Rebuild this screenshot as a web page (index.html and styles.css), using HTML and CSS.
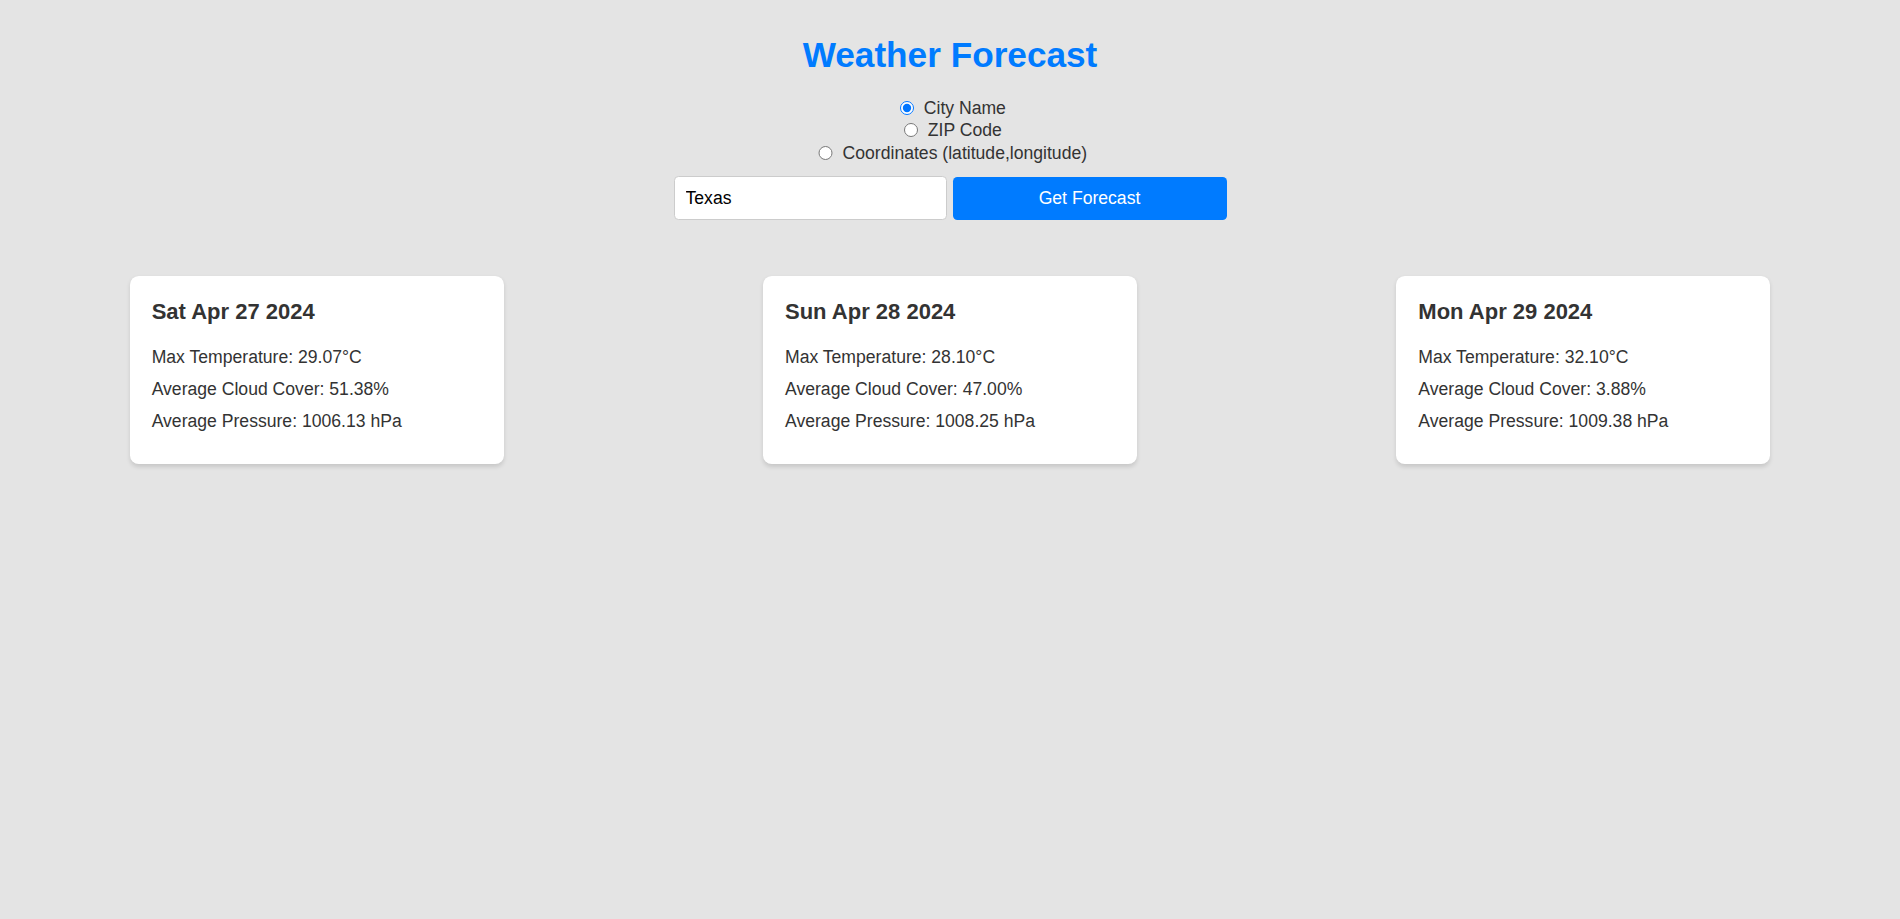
FILE: index.html
```html
<!DOCTYPE html>
<html lang="en">
<head>
<meta charset="UTF-8">
<title>Weather Forecast</title>
<link rel="stylesheet" href="styles.css">
</head>
<body class="page">
  <h1 class="title">Weather Forecast</h1>
  <div class="options">
    <label class="option"><input class="radio" type="radio" name="mode" checked> City Name</label>
    <label class="option"><input class="radio" type="radio" name="mode"> ZIP Code</label>
    <label class="option"><input class="radio" type="radio" name="mode"> Coordinates (latitude,longitude)</label>
  </div>
  <div class="search">
    <input class="search-input" type="text" value="Texas">
    <button class="search-btn" type="button">Get Forecast</button>
  </div>
  <div class="cards">
    <div class="card">
      <h3 class="card-title">Sat Apr 27 2024</h3>
      <p class="card-line">Max Temperature: 29.07°C</p>
      <p class="card-line">Average Cloud Cover: 51.38%</p>
      <p class="card-line">Average Pressure: 1006.13 hPa</p>
    </div>
    <div class="card">
      <h3 class="card-title">Sun Apr 28 2024</h3>
      <p class="card-line">Max Temperature: 28.10°C</p>
      <p class="card-line">Average Cloud Cover: 47.00%</p>
      <p class="card-line">Average Pressure: 1008.25 hPa</p>
    </div>
    <div class="card">
      <h3 class="card-title">Mon Apr 29 2024</h3>
      <p class="card-line">Max Temperature: 32.10°C</p>
      <p class="card-line">Average Cloud Cover: 3.88%</p>
      <p class="card-line">Average Pressure: 1009.38 hPa</p>
    </div>
  </div>
</body>
</html>
```
FILE: styles.css
```css
html, body {
  margin: 0;
  padding: 0;
}
.page {
  background: #e4e4e4;
  font-family: "Liberation Sans", Arial, sans-serif;
  font-size: 17.6px;
  color: #333;
  padding-top: 11px;
  min-height: 919px;
  box-sizing: border-box;
}
.title {
  text-align: center;
  color: #007bff;
  font-size: 35.2px;
  font-weight: bold;
  margin: 23.6px 0 22.4px;
}
.options {
  display: flex;
  flex-direction: column;
  align-items: center;
}
.option {
  display: block;
  line-height: 22px;
  height: 22.5px;
}
.radio {
  width: 14.3px;
  height: 14.3px;
  margin: 0 5px 0 5.5px;
  vertical-align: -1px;
  accent-color: #0075ff;
}
.search {
  display: flex;
  justify-content: center;
  gap: 5.5px;
  margin-top: 11.8px;
}
.search-input {
  box-sizing: border-box;
  width: 273.5px;
  height: 44px;
  padding: 0 11px;
  border: 1.1px solid #ccc;
  border-radius: 4.4px;
  background: #fff;
  font-family: "Liberation Sans", Arial, sans-serif;
  font-size: 17.6px;
  color: #000;
  outline: none;
}
.search-btn {
  box-sizing: border-box;
  width: 274px;
  height: 43px;
  margin-top: 0.5px;
  border: none;
  border-radius: 4.4px;
  background: #007bff;
  color: #fff;
  font-family: "Liberation Sans", Arial, sans-serif;
  font-size: 17.6px;
}
.cards {
  display: flex;
  justify-content: space-around;
  margin-top: 56px;
}
.card {
  box-sizing: border-box;
  width: 374px;
  padding: 22px;
  background: #fff;
  border-radius: 8.8px;
  box-shadow: 0 2.2px 4.4px rgba(0, 0, 0, 0.12);
}
.card-title {
  font-size: 22px;
  font-weight: bold;
  margin: 1px 0 21.5px;
}
.card-line {
  margin: 11px 0;
}
.card-line:last-child {
  margin-bottom: 10px;
}
```
